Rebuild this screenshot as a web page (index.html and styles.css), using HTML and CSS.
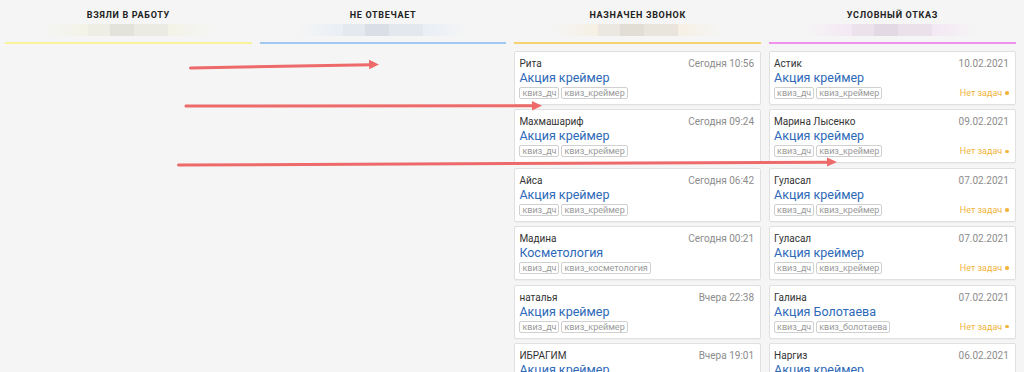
FILE: index.html
```html
<!DOCTYPE html>
<html lang="ru">
<head>
<meta charset="utf-8">
<title>Воронка</title>
<link rel="stylesheet" href="styles.css">
</head>
<body>
<div class="board">
  <section class="col c1">
    <header class="col-head">
      <div class="col-title">ВЗЯЛИ В РАБОТУ</div>
      <div class="col-sub"><span class="blur"></span></div>
      <div class="col-line"></div>
    </header>
    <div class="cards"></div>
  </section>

  <section class="col c2">
    <header class="col-head">
      <div class="col-title">НЕ ОТВЕЧАЕТ</div>
      <div class="col-sub"><span class="blur"></span></div>
      <div class="col-line"></div>
    </header>
    <div class="cards"></div>
  </section>

  <section class="col c3">
    <header class="col-head">
      <div class="col-title">НАЗНАЧЕН ЗВОНОК</div>
      <div class="col-sub"><span class="blur"></span></div>
      <div class="col-line"></div>
    </header>
    <div class="cards">
      <article class="card">
        <div class="card-top"><span class="name">Рита</span><span class="date">Сегодня 10:56</span></div>
        <div class="card-title">Акция креймер</div>
        <div class="card-bottom"><div class="tags"><span class="tag">квиз_дч</span><span class="tag">квиз_креймер</span></div></div>
      </article>
      <article class="card">
        <div class="card-top"><span class="name">Махмашариф</span><span class="date">Сегодня 09:24</span></div>
        <div class="card-title">Акция креймер</div>
        <div class="card-bottom"><div class="tags"><span class="tag">квиз_дч</span><span class="tag">квиз_креймер</span></div></div>
      </article>
      <article class="card">
        <div class="card-top"><span class="name">Айса</span><span class="date">Сегодня 06:42</span></div>
        <div class="card-title">Акция креймер</div>
        <div class="card-bottom"><div class="tags"><span class="tag">квиз_дч</span><span class="tag">квиз_креймер</span></div></div>
      </article>
      <article class="card">
        <div class="card-top"><span class="name">Мадина</span><span class="date">Сегодня 00:21</span></div>
        <div class="card-title">Косметология</div>
        <div class="card-bottom"><div class="tags"><span class="tag">квиз_дч</span><span class="tag">квиз_косметология</span></div></div>
      </article>
      <article class="card">
        <div class="card-top"><span class="name">наталья</span><span class="date">Вчера 22:38</span></div>
        <div class="card-title">Акция креймер</div>
        <div class="card-bottom"><div class="tags"><span class="tag">квиз_дч</span><span class="tag">квиз_креймер</span></div></div>
      </article>
      <article class="card">
        <div class="card-top"><span class="name">ИБРАГИМ</span><span class="date">Вчера 19:01</span></div>
        <div class="card-title">Акция креймер</div>
        <div class="card-bottom"><div class="tags"><span class="tag">квиз_дч</span><span class="tag">квиз_креймер</span></div></div>
      </article>
    </div>
  </section>

  <section class="col c4">
    <header class="col-head">
      <div class="col-title">УСЛОВНЫЙ ОТКАЗ</div>
      <div class="col-sub"><span class="blur"></span></div>
      <div class="col-line"></div>
    </header>
    <div class="cards">
      <article class="card">
        <div class="card-top"><span class="name">Астик</span><span class="date">10.02.2021</span></div>
        <div class="card-title">Акция креймер</div>
        <div class="card-bottom"><div class="tags"><span class="tag">квиз_дч</span><span class="tag">квиз_креймер</span></div><span class="notask">Нет задач</span></div>
      </article>
      <article class="card">
        <div class="card-top"><span class="name">Марина Лысенко</span><span class="date">09.02.2021</span></div>
        <div class="card-title">Акция креймер</div>
        <div class="card-bottom"><div class="tags"><span class="tag">квиз_дч</span><span class="tag">квиз_креймер</span></div><span class="notask">Нет задач</span></div>
      </article>
      <article class="card">
        <div class="card-top"><span class="name">Гуласал</span><span class="date">07.02.2021</span></div>
        <div class="card-title">Акция креймер</div>
        <div class="card-bottom"><div class="tags"><span class="tag">квиз_дч</span><span class="tag">квиз_креймер</span></div><span class="notask">Нет задач</span></div>
      </article>
      <article class="card">
        <div class="card-top"><span class="name">Гуласал</span><span class="date">07.02.2021</span></div>
        <div class="card-title">Акция креймер</div>
        <div class="card-bottom"><div class="tags"><span class="tag">квиз_дч</span><span class="tag">квиз_креймер</span></div><span class="notask">Нет задач</span></div>
      </article>
      <article class="card">
        <div class="card-top"><span class="name">Галина</span><span class="date">07.02.2021</span></div>
        <div class="card-title">Акция Болотаева</div>
        <div class="card-bottom"><div class="tags"><span class="tag">квиз_дч</span><span class="tag">квиз_болотаева</span></div><span class="notask">Нет задач</span></div>
      </article>
      <article class="card">
        <div class="card-top"><span class="name">Наргиз</span><span class="date">06.02.2021</span></div>
        <div class="card-title">Акция креймер</div>
        <div class="card-bottom"><div class="tags"><span class="tag">квиз_дч</span><span class="tag">квиз_креймер</span></div><span class="notask">Нет задач</span></div>
      </article>
    </div>
  </section>

  <section class="col c5">
    <header class="col-head">
      <div class="col-title">&nbsp;</div>
      <div class="col-sub"></div>
      <div class="col-line"></div>
    </header>
    <div class="cards">
      <article class="card"></article>
      <article class="card"></article>
      <article class="card"></article>
      <article class="card"></article>
      <article class="card"></article>
      <article class="card"></article>
    </div>
  </section>
</div>

<svg class="arrows" width="1024" height="372" viewBox="0 0 1024 372" aria-hidden="true">
  <g stroke="#ee6a6a" stroke-width="3" stroke-linecap="round" fill="none">
    <line x1="190.5" y1="68" x2="371" y2="64.7"/>
    <line x1="186" y1="106" x2="533" y2="105.8"/>
    <line x1="178.5" y1="165" x2="828" y2="162.2"/>
  </g>
  <g fill="#ee6a6a">
    <polygon points="379,64.5 369,59.8 369.2,69.2"/>
    <polygon points="542,105.7 532,101 532,110.4"/>
    <polygon points="837,162 827,157.4 827,166.6"/>
  </g>
</svg>
</body>
</html>
```

FILE: styles.css
```css
html, body {
  margin: 0;
  padding: 0;
}

body {
  background: #f5f5f5;
  font-family: Roboto, "Noto Sans", Arial, sans-serif;
  color: #333;
  width: 1024px;
  height: 372px;
  overflow: hidden;
  position: relative;
}

.board {
  display: grid;
  grid-auto-flow: column;
  grid-auto-columns: 254.7px;
  width: 1024px;
  overflow: hidden;
}

.col {
  padding: 0 3px 0 5px;
  min-width: 0;
}

.col-head {
  padding-top: 9px;
}

.col-title {
  font-size: 9px;
  line-height: 12px;
  font-weight: 700;
  letter-spacing: 0.7px;
  text-align: center;
  color: #222;
  white-space: nowrap;
}

.col-sub {
  height: 12px;
  margin: 3px auto 0;
  width: 170px;
  display: flex;
  justify-content: center;
}

.blur {
  width: 80px;
  height: 12px;
}

.col-line {
  height: 2px;
  margin-top: 6px;
}

.c1 .col-sub { background: linear-gradient(90deg, rgba(240,240,215,0) 0%, rgba(242,242,225,.7) 25%, rgba(242,242,225,.7) 75%, rgba(240,240,215,0) 100%); }
.c1 .blur { background: linear-gradient(90deg, #eeeee4 0 28%, #e3e3db 28% 58%, #ebebe3 58% 100%); }
.c1 .col-line { background: #f6f39b; }

.c2 .col-sub { background: linear-gradient(90deg, rgba(225,235,245,0) 0%, rgba(230,237,246,.8) 25%, rgba(230,237,246,.8) 75%, rgba(225,235,245,0) 100%); }
.c2 .blur { background: linear-gradient(90deg, #e4e8ef 0 28%, #dadee6 28% 58%, #e3e7ee 58% 100%); }
.c2 .col-line { background: #9fc7ef; }

.c3 .col-sub { background: linear-gradient(90deg, rgba(246,238,220,0) 0%, rgba(246,239,224,.8) 25%, rgba(246,239,224,.8) 75%, rgba(246,238,220,0) 100%); }
.c3 .blur { background: linear-gradient(90deg, #ebe8e1 0 28%, #e2ded5 28% 58%, #e9e5dd 58% 100%); }
.c3 .col-line { background: #f6d36e; }

.c4 .col-sub { background: linear-gradient(90deg, rgba(242,225,242,0) 0%, rgba(243,229,243,.8) 25%, rgba(243,229,243,.8) 75%, rgba(242,225,242,0) 100%); }
.c4 .blur { background: linear-gradient(90deg, #ebe2eb 0 28%, #e3d9e4 28% 58%, #eae1ea 58% 100%); }
.c4 .col-line { background: #ee92ee; }

.c5 .col-line { background: #f5b24f; }

.cards {
  margin-top: 7px;
  display: flex;
  flex-direction: column;
  gap: 4.4px;
}

.card {
  box-sizing: border-box;
  height: 54px;
  background: #fff;
  border: 1px solid #e0e0e0;
  border-radius: 2px;
  padding: 5px 6px 5px 4px;
  display: flex;
  flex-direction: column;
  box-shadow: 0 1px 1px rgba(0,0,0,0.03);
}

.card-top {
  display: flex;
  justify-content: space-between;
  font-size: 10px;
  line-height: 13px;
  white-space: nowrap;
}

.name {
  color: #333;
}

.date {
  color: #8c8c8c;
}

.card-title {
  font-size: 12.5px;
  line-height: 15px;
  color: #2d69b7;
  white-space: nowrap;
}

.card-bottom {
  margin-top: 2px;
  display: flex;
  justify-content: space-between;
  align-items: center;
}

.tags {
  display: flex;
  gap: 2px;
}

.tag {
  font-size: 9px;
  line-height: 10px;
  color: #9a9a9a;
  border: 1px solid #d0d0d0;
  border-radius: 2px;
  padding: 0 2px;
  white-space: nowrap;
}

.notask {
  font-size: 9px;
  line-height: 10px;
  color: #f0b43c;
  display: flex;
  align-items: center;
  gap: 3px;
  white-space: nowrap;
}

.notask::after {
  content: "";
  width: 3.5px;
  height: 3.5px;
  border-radius: 50%;
  background: #f0b43c;
}

.arrows {
  position: absolute;
  top: 0;
  left: 0;
  pointer-events: none;
}
```
